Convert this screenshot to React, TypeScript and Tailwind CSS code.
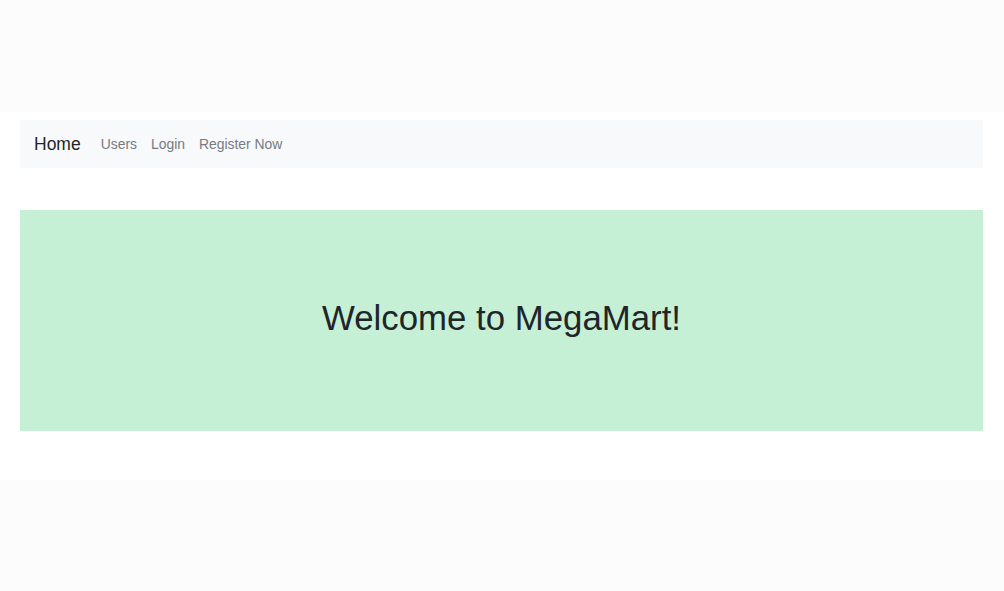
import React from 'react';

export default function App() {
    const links = ['Users', 'Login', 'Register Now'];

    return (
        <div className="min-h-[591px] bg-[#fcfcfc] flex flex-col font-['Liberation_Sans',Arial,sans-serif]">
            <div className="h-[112px]"></div>
            <main className="bg-white h-[368px] pl-5 pr-[21px] pt-2">
                <nav className="h-12 bg-[#f8f9fa] flex items-center px-[14px]">
                    <a href="#" className="text-[17.5px] text-[#212529] mr-[13px]">
                        Home
                    </a>
                    {links.map((link) => (
                        <a key={link} href="#" className="text-[13.9px] text-[#777b80] px-[7px]">
                            {link}
                        </a>
                    ))}
                </nav>
                <section className="mt-[42px] h-[221px] bg-[#c5f0d6] flex items-center justify-center">
                    <h1 className="text-[34.8px] text-[#212529] pb-1">Welcome to MegaMart!</h1>
                </section>
            </main>
        </div>
    );
}
